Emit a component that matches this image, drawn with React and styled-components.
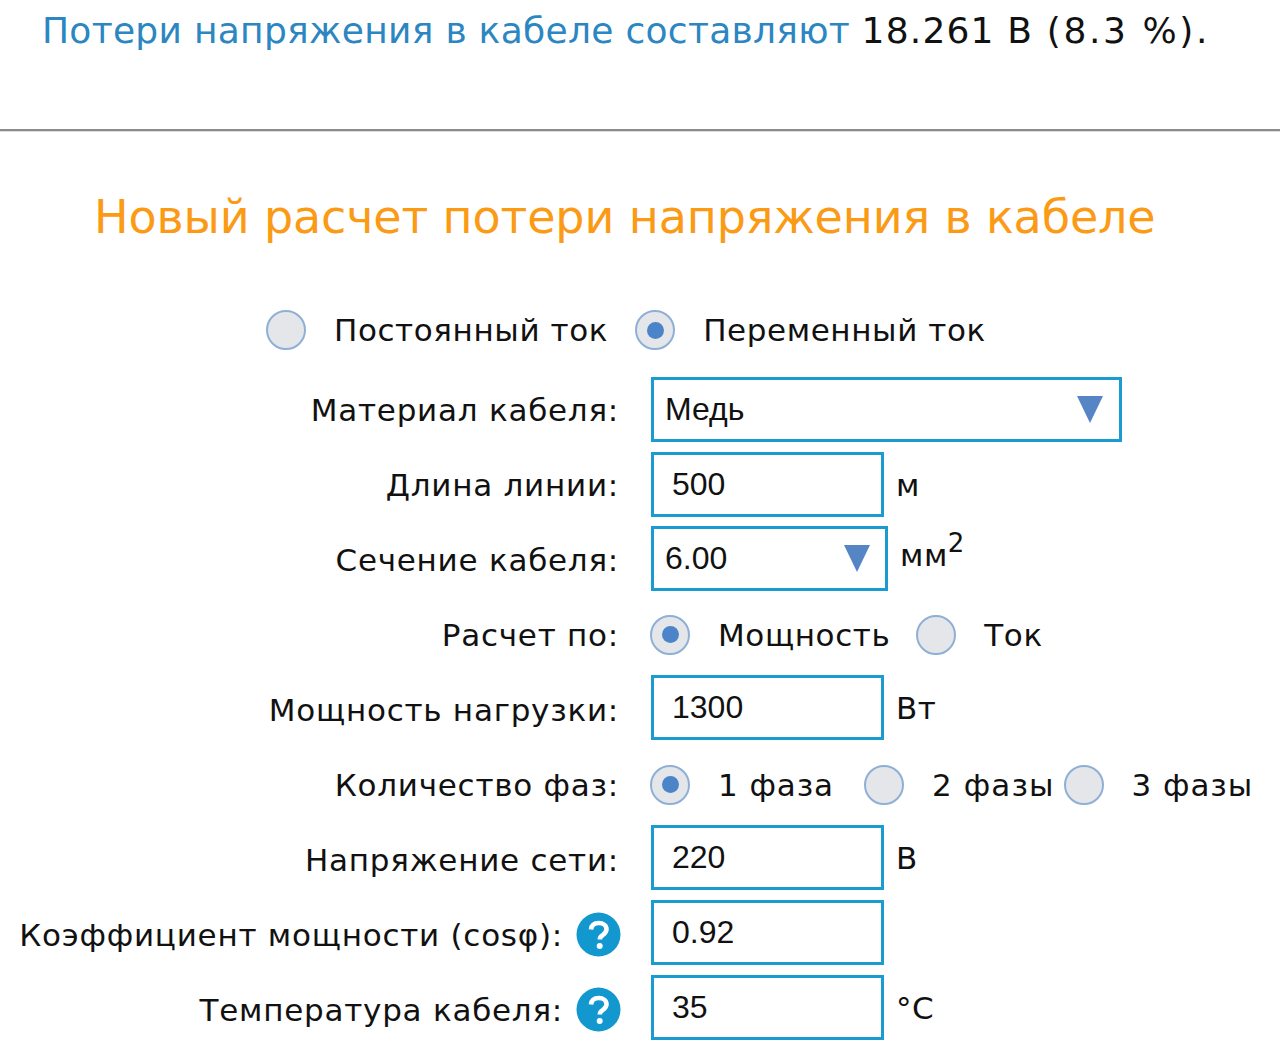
import React from 'react';
import styled, { createGlobalStyle } from 'styled-components';

const Global = createGlobalStyle`
  html, body { margin: 0; padding: 0; background: #fff; }
  body { font-family: "DejaVu Sans", Verdana, sans-serif; color: #111; overflow: hidden; }
`;
const Page = styled.div`
  width: 1280px;
  height: 1061px;
  overflow: hidden;
`;
const Result = styled.p`
  margin: 0;
  height: 129px;
  box-sizing: border-box;
  padding: 8px 0 0 42px;
  font-size: 36px;
  line-height: 46px;
  white-space: nowrap;
  color: #111;
`;
const ResultLead = styled.span`
  color: #2b86c1;
  letter-spacing: 0.29px;
`;
const ResultValue = styled.span`
  letter-spacing: ${p => p.$track}px;
  margin-left: ${p => p.$gap ?? 0}px;
`;
const Divider = styled.hr`
  margin: 0;
  height: 2px;
  border: 0;
  border-bottom: 1px solid #dcdcdc;
  background: #8c8c8c;
  background-clip: padding-box;
`;
const Title = styled.h2`
  margin: 55px 0 0;
  padding-left: 94px;
  font-size: 46px;
  line-height: 60px;
  font-weight: 400;
  letter-spacing: -0.13px;
  color: #fb9a14;
  white-space: nowrap;
`;
const Form = styled.div`
  margin-top: 51px;
  display: flex;
  flex-direction: column;
`;
const TopChoices = styled.div`
  height: 64px;
  margin-bottom: 10px;
  padding-left: 266px;
  display: flex;
  align-items: center;
`;
const Row = styled.div`
  height: 75px;
  display: grid;
  grid-template-columns: 619px 1fr;
  column-gap: 32px;
  align-items: center;
`;
const Label = styled.div`
  display: flex;
  justify-content: flex-end;
  align-items: center;
  gap: 13px;
  font-size: 31px;
  letter-spacing: 0.75px;
  white-space: nowrap;
`;
const Help = styled.svg`
  width: 45px;
  height: 45px;
  flex: none;
  margin-right: -2px;
`;
const Controls = styled.div`
  display: flex;
  align-items: center;
  margin-left: ${p => (p.$radios ? -1 : 0)}px;
  margin-bottom: ${p => p.$lift ?? 0}px;
`;
const Box = styled.div`
  box-sizing: border-box;
  width: ${p => p.$w}px;
  height: 65px;
  border: 3px solid #1a9bd1;
  background: #fff;
  display: flex;
  align-items: center;
  justify-content: space-between;
  padding: 0 ${p => p.$pr ?? 17}px 0 ${p => p.$pl ?? 18}px;
  font-family: "Liberation Sans", Arial, sans-serif;
  font-size: 32px;
  color: #111;
`;
const Arrow = styled.span`
  width: 0;
  height: 0;
  border-left: 13px solid transparent;
  border-right: 13px solid transparent;
  border-top: 27px solid #5585c5;
`;
const Unit = styled.span`
  margin-left: 12px;
  margin-bottom: ${p => (p.$raised ? 8 : 0)}px;
  font-size: 31px;
  letter-spacing: 0.5px;
  white-space: nowrap;
`;
const Sup = styled.sup`
  font-size: 26px;
  line-height: 0;
  vertical-align: 14px;
`;
const Radio = styled.span`
  box-sizing: border-box;
  flex: none;
  width: 40px;
  height: 40px;
  border-radius: 50%;
  border: 2px solid #8fb0d6;
  background: #e4e6ea;
  display: flex;
  align-items: center;
  justify-content: center;
  &::after {
    content: "";
    display: ${p => (p.$on ? 'block' : 'none')};
    width: 17px;
    height: 17px;
    border-radius: 50%;
    background: #4b84c8;
  }
`;
const Choice = styled.span`
  margin: 0 ${p => p.$after}px 0 28px;
  font-size: 31px;
  letter-spacing: ${p => p.$track ?? 0.6}px;
  white-space: nowrap;
`;

const HelpIcon = () => (
  <Help viewBox="0 0 45 45">
    <circle cx="22.5" cy="22.5" r="22" fill="#1397cf" />
    <path d="M15 17.5c.5-4.500 3.800-6.500 7.800-6.500 4.300 0 7.700 2.500 7.700 6.300 0 3-1.800 4.500-3.800 5.800-2 1.300-2.900 2.200-2.900 4.400" fill="none" stroke="#fff" strokeWidth="4.600" />
    <circle cx="23.700" cy="34" r="3" fill="#fff" />
  </Help>
);

export default function App() {
  return (
    <Page>
      <Global />
      <Result>
        <ResultLead>Потери напряжения в кабеле составляют</ResultLead>{' '}
        <ResultValue $track={1.2}>18.261 В</ResultValue>{' '}
        <ResultValue $track={2.6} $gap={2}>(8.3 %).</ResultValue>
      </Result>
      <Divider />
      <Title>Новый расчет потери напряжения в кабеле</Title>
      <Form>
        <TopChoices>
          <Radio />
          <Choice $after={27}>Постоянный ток</Choice>
          <Radio $on />
          <Choice $after={0}>Переменный ток</Choice>
        </TopChoices>
        <Row>
          <Label>Материал кабеля:</Label>
          <Controls>
            <Box $w={471} $pl={11} $pr={16}>Медь<Arrow /></Box>
          </Controls>
        </Row>
        <Row>
          <Label>Длина линии:</Label>
          <Controls>
            <Box $w={233} $pl={18}>500</Box>
            <Unit>м</Unit>
          </Controls>
        </Row>
        <Row>
          <Label>Сечение кабеля:</Label>
          <Controls $lift={2}>
            <Box $w={237} $pl={11} $pr={15}>6.00<Arrow /></Box>
            <Unit $raised>мм<Sup>2</Sup></Unit>
          </Controls>
        </Row>
        <Row>
          <Label>Расчет по:</Label>
          <Controls $radios>
            <Radio $on />
            <Choice $after={26}>Мощность</Choice>
            <Radio />
            <Choice $after={0}>Ток</Choice>
          </Controls>
        </Row>
        <Row>
          <Label>Мощность нагрузки:</Label>
          <Controls $lift={4}>
            <Box $w={233} $pl={18}>1300</Box>
            <Unit>Вт</Unit>
          </Controls>
        </Row>
        <Row>
          <Label>Количество фаз:</Label>
          <Controls $radios>
            <Radio $on />
            <Choice $after={30} $track={0.9}>1 фаза</Choice>
            <Radio />
            <Choice $after={9} $track={1.1}>2 фазы</Choice>
            <Radio />
            <Choice $after={0} $track={0.9}>3 фазы</Choice>
          </Controls>
        </Row>
        <Row>
          <Label>Напряжение сети:</Label>
          <Controls $lift={4}>
            <Box $w={233} $pl={18}>220</Box>
            <Unit>В</Unit>
          </Controls>
        </Row>
        <Row>
          <Label>Коэффициент мощности (cosφ):<HelpIcon /></Label>
          <Controls $lift={4}>
            <Box $w={233} $pl={18}>0.92</Box>
          </Controls>
        </Row>
        <Row>
          <Label>Температура кабеля:<HelpIcon /></Label>
          <Controls $lift={4}>
            <Box $w={233} $pl={18}>35</Box>
            <Unit>°C</Unit>
          </Controls>
        </Row>
      </Form>
    </Page>
  );
}
